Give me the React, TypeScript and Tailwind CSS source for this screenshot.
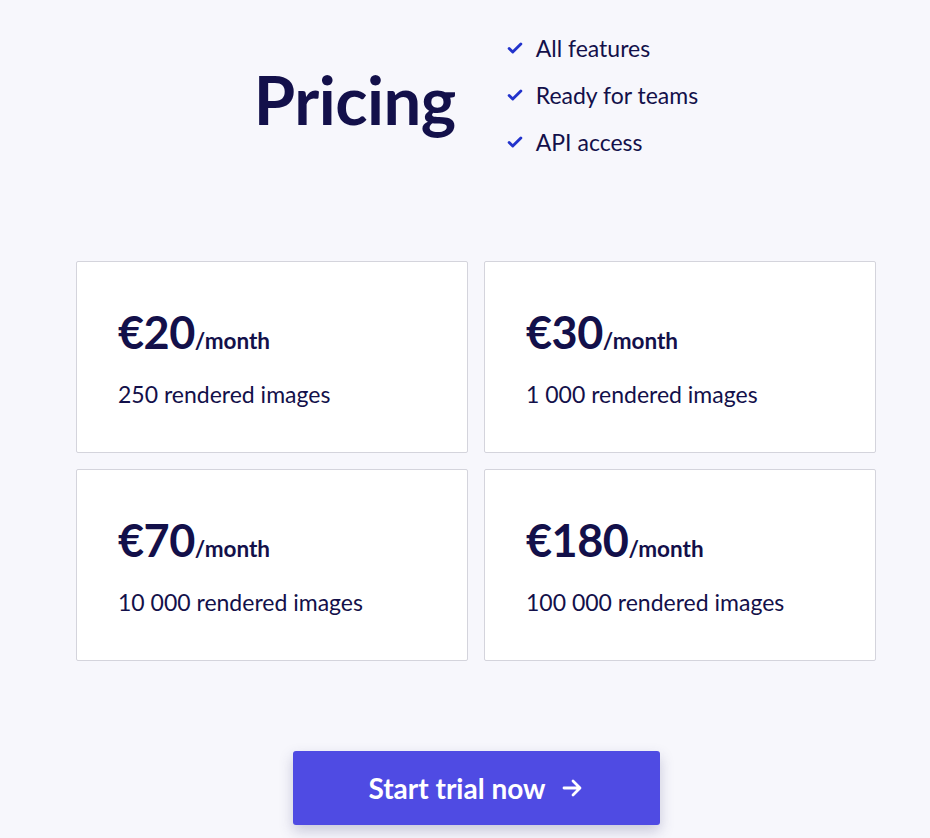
const plans = [
  { price: "€20", images: "250 rendered images" },
  { price: "€30", images: "1 000 rendered images" },
  { price: "€70", images: "10 000 rendered images" },
  { price: "€180", images: "100 000 rendered images" },
];

const features = ["All features", "Ready for teams", "API access"];

function Check() {
  return (
    <svg className="w-[18px] h-[18px] text-[#2233cc]" viewBox="0 0 20 20" fill="none">
      <path d="M3.5 10.5l4 4 9-9" stroke="currentColor" strokeWidth="3.2" strokeLinecap="round" strokeLinejoin="round" />
    </svg>
  );
}

export default function App() {
  return (
    <div className="min-h-[838px] bg-[#f7f7fc] font-['Lato','Liberation_Sans',sans-serif] text-[#13104a]">
      <div className="w-[800px] ml-[76px] pt-[34px]">
        <div className="flex items-center justify-center gap-[50px]">
          <h1 className="text-[67px] font-bold leading-none tracking-[-0.5px] mt-[8px]">Pricing</h1>
          <ul className="flex flex-col gap-[19px]">
            {features.map((f) => (
              <li key={f} className="flex items-center gap-[12px] text-[23px] leading-[28px]">
                <Check />
                {f}
              </li>
            ))}
          </ul>
        </div>

        <div className="grid grid-cols-2 gap-[16px] mt-[105px]">
          {plans.map((p) => (
            <div
              key={p.price}
              className="h-[192px] bg-white border border-[#d4d4dc] rounded-[2px] px-[41px] pt-[46px]"
            >
              <div className="flex items-baseline">
                <span className="text-[45px] font-bold leading-[48px] tracking-[-0.5px]">{p.price}</span>
                <span className="text-[22.5px] font-bold">/month</span>
              </div>
              <p className="mt-[22px] text-[23px] leading-[28px]">{p.images}</p>
            </div>
          ))}
        </div>

        <div className="flex justify-center mt-[90px]">
          <button className="w-[367px] h-[74px] bg-[#4f4be3] rounded-[3px] text-white text-[28px] font-bold flex items-center justify-center gap-[14px] shadow-[0_6px_14px_rgba(60,60,120,0.25)]">
            Start trial now
            <svg className="w-[24px] h-[24px]" viewBox="0 0 24 24" fill="none">
              <path d="M4 12h15M13 5l7 7-7 7" stroke="currentColor" strokeWidth="2.8" strokeLinecap="round" strokeLinejoin="round" />
            </svg>
          </button>
        </div>
      </div>
    </div>
  );
}
